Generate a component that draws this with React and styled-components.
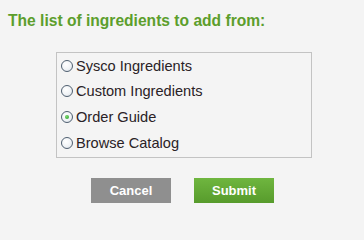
import React, { useState } from "react";
import styled, { createGlobalStyle } from "styled-components";

const GlobalStyle = createGlobalStyle`
  html, body {
    margin: 0;
    padding: 0;
    background: #f4f4f4;
    font-family: "Liberation Sans", Arial, sans-serif;
  }
`;

const Page = styled.div`
  width: 364px;
  height: 215px;
  background: #f4f4f4;
  box-sizing: border-box;
  padding-top: 12px;
`;

const Title = styled.h2`
  margin: 0 0 0 8px;
  font-size: 15.6px;
  line-height: 18px;
  font-weight: bold;
  color: #5c9e2c;
`;

const ListBox = styled.div`
  margin: 22px 0 0 56px;
  width: 256px;
  height: 106px;
  box-sizing: border-box;
  border: 1px solid #c3c3c3;
  padding: 0 0 0 4px;
  display: flex;
  flex-direction: column;
`;

const Option = styled.label`
  display: flex;
  align-items: center;
  height: 25.6px;
  font-size: 14.6px;
  color: #2a2226;
  cursor: pointer;
  gap: 3px;
`;

const Radio = styled.span`
  width: 10px;
  height: 10px;
  border-radius: 50%;
  border: 1px solid #4f5f70;
  background: radial-gradient(circle at 40% 35%, #ffffff 0%, #f0f3f6 55%, #d3dae2 100%);
  display: inline-flex;
  align-items: center;
  justify-content: center;
  flex: none;

  &::after {
    content: "";
    width: 4px;
    height: 4px;
    border-radius: 50%;
    background: ${(p) => (p.checked ? "radial-gradient(circle at 40% 35%, #7fd86c, #1f9e2a)" : "transparent")};
  }
`;

const Buttons = styled.div`
  display: flex;
  justify-content: center;
  gap: 23px;
  margin-top: 20px;
  padding-left: 1px;
`;

const Button = styled.button`
  width: 80px;
  height: 25px;
  border: none;
  padding: 0;
  font-family: "Liberation Sans", Arial, sans-serif;
  font-size: 13px;
  font-weight: bold;
  color: #fff;
  cursor: pointer;
  background: ${(p) =>
    p.primary ? "linear-gradient(#6fb63f, #579b2c)" : "#8f8f8f"};
`;

const options = [
  "Sysco Ingredients",
  "Custom Ingredients",
  "Order Guide",
  "Browse Catalog",
];

export default function App() {
  const [selected, setSelected] = useState("Order Guide");

  return (
    <>
      <GlobalStyle />
      <Page>
        <Title>The list of ingredients to add from:</Title>
        <ListBox>
          {options.map((o) => (
            <Option key={o} onClick={() => setSelected(o)}>
              <Radio checked={selected === o} />
              {o}
            </Option>
          ))}
        </ListBox>
        <Buttons>
          <Button>Cancel</Button>
          <Button primary>Submit</Button>
        </Buttons>
      </Page>
    </>
  );
}
